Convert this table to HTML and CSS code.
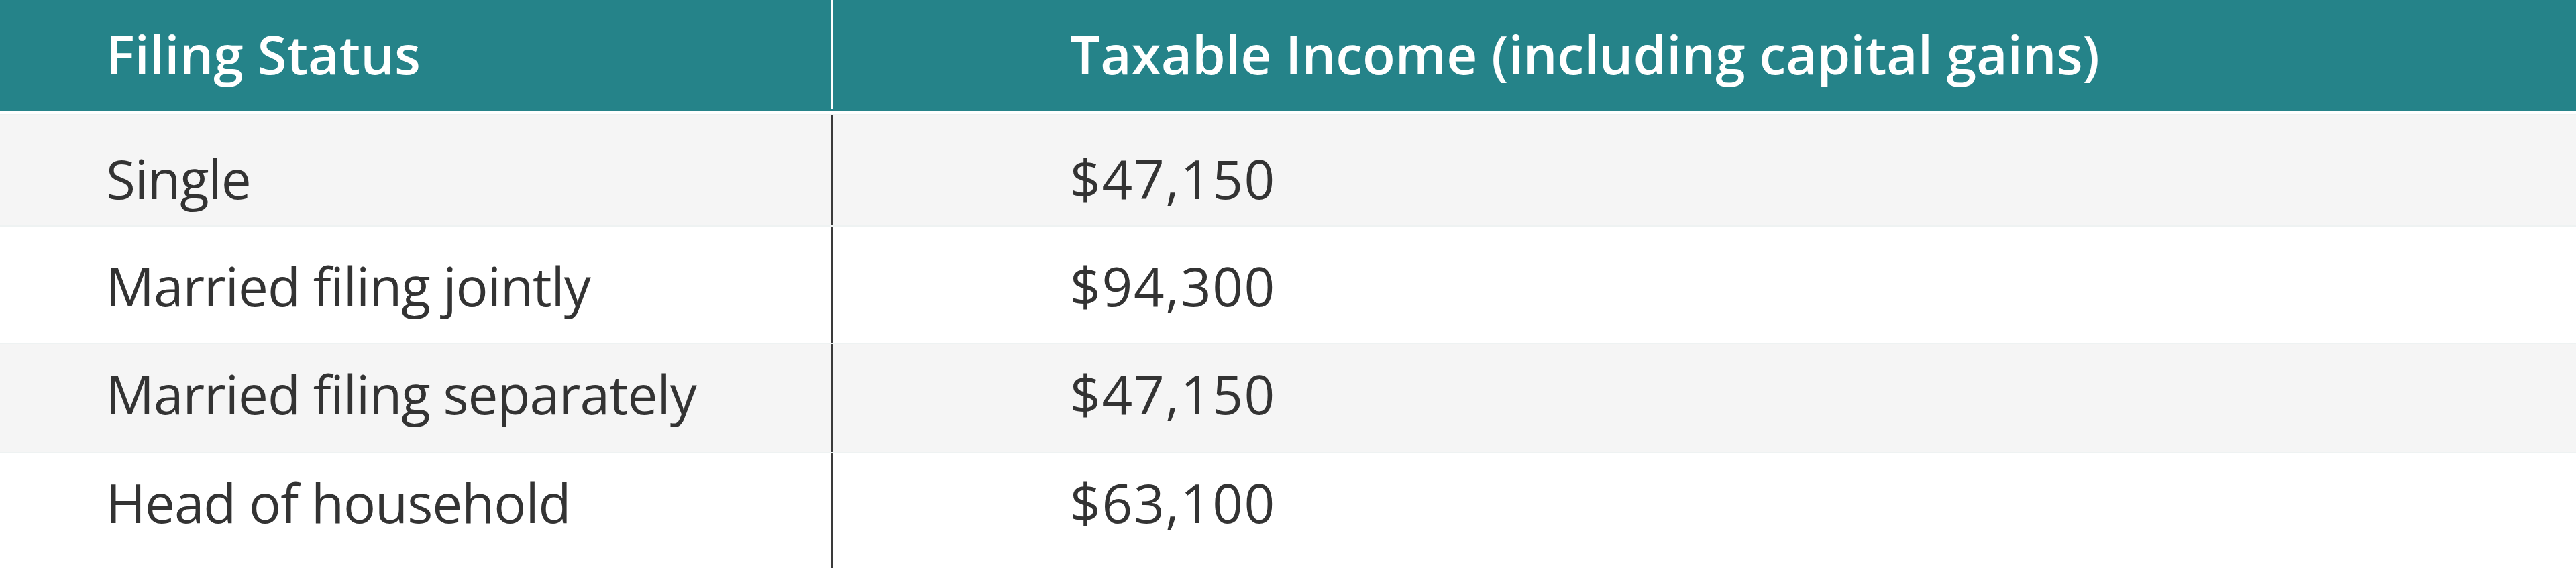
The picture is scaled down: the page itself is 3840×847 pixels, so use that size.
FILE: index.html
```html
<!DOCTYPE html>
<html lang="en">
<head>
<meta charset="utf-8">
<title>Filing Status</title>
<link rel="stylesheet" href="styles.css">
</head>
<body>
<div class="table">
  <div class="row head">
    <div class="cell c1">Filing Status</div>
    <div class="cell c2">Taxable Income (including capital gains)</div>
  </div>
  <div class="row r1 alt">
    <div class="cell c1">Single</div>
    <div class="cell c2">$47,150</div>
  </div>
  <div class="row r2">
    <div class="cell c1">Married filing jointly</div>
    <div class="cell c2">$94,300</div>
  </div>
  <div class="row r3 alt">
    <div class="cell c1">Married filing separately</div>
    <div class="cell c2">$47,150</div>
  </div>
  <div class="row r4">
    <div class="cell c1">Head of household</div>
    <div class="cell c2">$63,100</div>
  </div>
</div>
</body>
</html>
```

FILE: styles.css
```css
html, body {
  margin: 0;
  padding: 0;
  background: #ffffff;
}
body {
  width: 3840px;
  height: 847px;
  overflow: hidden;
  font-family: "Open Sans", "Liberation Sans", sans-serif;
  color: #333333;
}
.table {
  display: flex;
  flex-direction: column;
  width: 3840px;
}
.row {
  display: grid;
  grid-template-columns: 1239px 1fr;
  box-sizing: border-box;
  font-size: 80px;
  line-height: 1;
}
.cell {
  box-sizing: border-box;
  white-space: nowrap;
}
.c1 {
  padding-left: 158px;
}
.c2 {
  padding-left: 354px;
  border-left: 2px solid #3a3a3a;
}
.row:not(.head) .c1 {
  letter-spacing: -1px;
}
.row:not(.head) .c2 {
  letter-spacing: 1.7px;
}
.head {
  height: 170px;
  background: #258389;
  color: #ffffff;
  font-weight: 600;
  border-bottom: 4px solid #ffffff;
  box-shadow: inset 0 -1px 0 #cfe4e5;
}
.head .cell {
  padding-top: 40px;
}
.head .c2 {
  border-left: 2px solid #ffffff;
  margin-bottom: 4px;
}
.alt {
  background: #f5f5f5;
}
.row + .row:not(.head) {
  border-top: 2px solid #eef2f2;
}
.r1 { height: 166px; }
.r2 { height: 175px; }
.r3 { height: 163px; }
.r4 { height: 173px; }
.r1 .cell { padding-top: 54px; }
.r2 .cell { padding-top: 48px; }
.r3 .cell { padding-top: 34px; }
.r4 .cell { padding-top: 33px; }
```
